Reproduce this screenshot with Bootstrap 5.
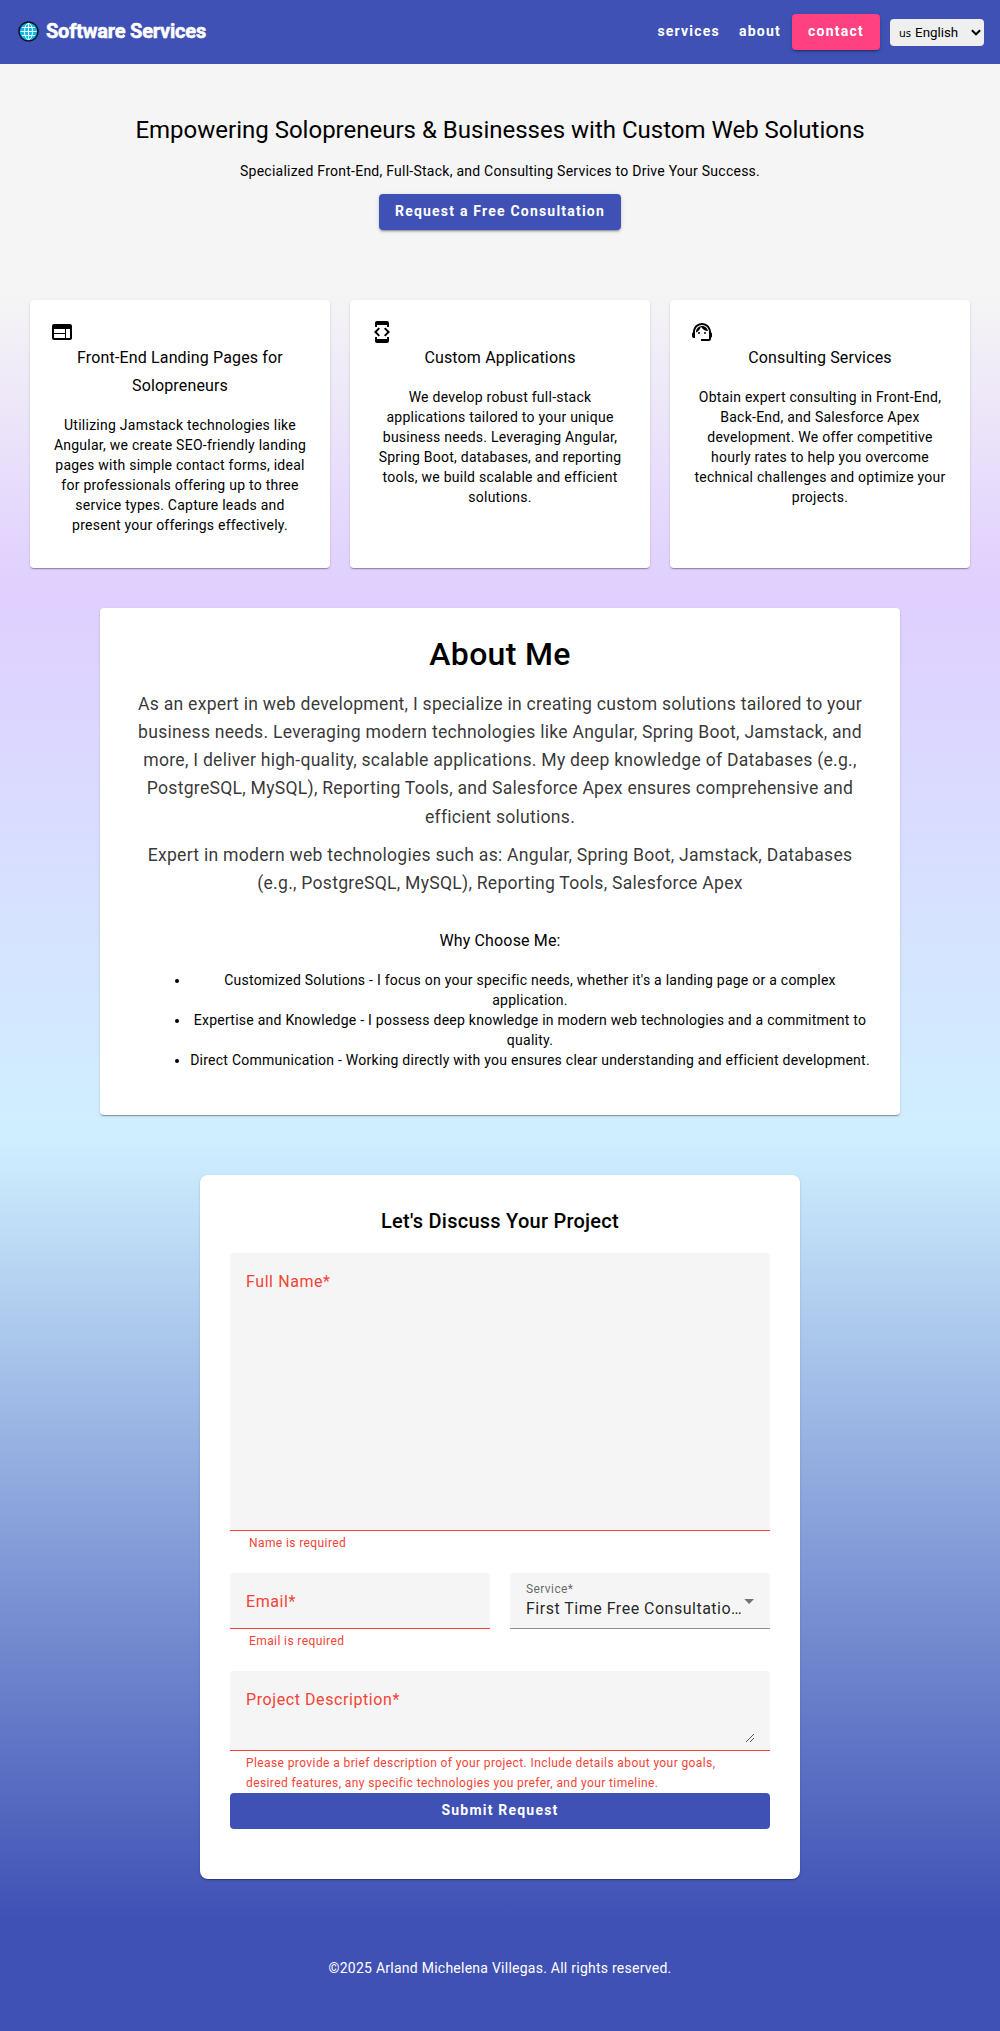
<!DOCTYPE html>
<html lang="en">
<head>
<meta charset="utf-8">
<meta name="viewport" content="width=device-width, initial-scale=1">
<title>Software Services</title>
<link href="https://cdn.jsdelivr.net/npm/bootstrap@5.3.0/dist/css/bootstrap.min.css" rel="stylesheet">
<style>
:root{--brand:#3f51b5;--pink:#ff4081;--err:#f44336}
body{font-family:Roboto,"Liberation Sans",sans-serif;font-size:14px;line-height:20px;letter-spacing:.25px;color:#000;min-height:2031px;
background:linear-gradient(180deg,#f5f5f5 0,#f5f5f5 290px,#e0cfff 590px,#cfefff 1140px,#3f51b5 1920px)}
.topbar{height:64px;background:var(--brand);padding:0 16px 2px 18px}
.brand{font-size:20px;line-height:24px;font-weight:700;color:#fff;letter-spacing:-.2px;gap:7px}
.brand span{-webkit-text-stroke:.5px #fff}
.act{height:36px;padding:0 16px 2px;border:0;border-radius:4px;font-size:14px;line-height:34px;font-weight:700;letter-spacing:1.25px;color:#fff;text-decoration:none;display:inline-block;text-align:center}
.act.flat{padding:0;letter-spacing:1.22px}
.topbar nav{padding-top:2px}
.raised{box-shadow:0 3px 1px -2px rgba(0,0,0,.2),0 2px 2px rgba(0,0,0,.14),0 1px 5px rgba(0,0,0,.12)}
.bg-brand{background:var(--brand);letter-spacing:1.21px}
.bg-pink{background:var(--pink)}
.lang{width:94px;height:27px;border:0;border-radius:4px;background:#efefef;color:#000;font-size:13.333px;line-height:25px;padding:0 3px 0 9px;letter-spacing:0;margin-left:10px;margin-top:1px}
.lang .cc{font-family:"Noto Sans",sans-serif;font-size:11px;margin-right:4px}
.hero{padding-top:50px;height:236px}
.hero h1{font-size:24px;line-height:32px;font-weight:400;letter-spacing:0;margin:0 0 15px}
.hero .tagline{margin-bottom:13px}
.sheet{border:0;border-radius:4px;background:#fff;color:#000;box-shadow:0 2px 1px -1px rgba(0,0,0,.2),0 1px 1px rgba(0,0,0,.14),0 1px 3px rgba(0,0,0,.12)}
.svc{width:300px;height:268px;padding:20px}
.svc svg{width:24px;height:24px;display:block}
.sub16{font-size:16px;line-height:28px;font-weight:400;letter-spacing:.15px;margin:0}
.svc .sub16{margin:0 0 15px}
.about{width:800px;height:507px;margin:40px auto 60px;padding:30px}
.about h2{font-size:32px;line-height:32px;font-weight:500;letter-spacing:.3px;margin:0 0 20px}
.about p{font-size:17.6px;line-height:28.16px;color:rgba(0,0,0,.8);letter-spacing:.25px;margin:0 0 10px}
.about .sub16{margin-top:30px}
.about ul{padding-left:60px;margin:15px 0 0}
.formcard{width:600px;height:704px;border-radius:8px;padding:30px}
.formcard h2{font-size:20px;line-height:32px;font-weight:500;letter-spacing:.25px;margin:0 0 16px}
.fld{background:#f5f5f5;border-radius:4px 4px 0 0;border-bottom:1px solid var(--err);color:var(--err);font-size:16px;line-height:24px;letter-spacing:.58px;padding:17px 16px 0}
.f-name{height:278px}
.f-mid{width:260px;height:56px}
.f-desc{height:80px;margin-top:20px}
.msg{color:var(--err);font-size:12px;line-height:20px;letter-spacing:.4px}
.msg.short{padding:2px 0 0 19px}
.f-svc{border-color:#8c8c8c;color:rgba(0,0,0,.87);padding-top:0;letter-spacing:.5px}
.f-svc small{display:block;font-size:12px;line-height:18px;letter-spacing:.4px;color:rgba(0,0,0,.6);margin-bottom:-1px}
.arrow{width:10px;height:5px;background:#737373;clip-path:polygon(0 0,100% 0,50% 100%);margin:2px 0 0 2px}
.foot{color:#fff;padding-top:79px}
</style>
</head>
<body>
<header class="topbar d-flex align-items-center justify-content-between">
  <div class="brand d-flex align-items-center">
    <svg width="21" height="21" viewBox="0 0 21 21"><circle cx="10.5" cy="10.5" r="9.5" fill="#03b9f2" stroke="#111" stroke-width="1.5"/><g fill="none" stroke="#fff" stroke-width="1"><ellipse cx="10.5" cy="10.5" rx="4" ry="8.1"/><path d="M10.500 2.500v16M2.500 10.500h16M4 6.500h13M4 14.500h13"/></g></svg>
    <span>Software Services</span>
  </div>
  <nav class="d-flex align-items-center">
    <a class="act flat me-3" href="#services">services</a>
    <a class="act flat" href="#about" style="margin:0 11px 0 3px">about</a>
    <a class="act bg-pink raised" href="#contact">contact</a>
    <button type="button" class="lang d-flex align-items-center justify-content-between"><span><span class="cc">us</span>English</span>
      <svg width="10" height="7" viewBox="0 0 10 7" fill="none" stroke="#000" stroke-width="2"><path d="M.9 1.200 5 5.300 9.100 1.200"/></svg></button>
  </nav>
</header>
<section class="hero text-center">
  <h1>Empowering Solopreneurs &amp; Businesses with Custom Web Solutions</h1>
  <div class="tagline">Specialized Front-End, Full-Stack, and Consulting Services to Drive Your Success.</div>
  <a class="act bg-brand raised" href="#contact">Request a Free Consultation</a>
</section>
<main>
  <section class="d-flex justify-content-center" id="services" style="gap:20px">
    <div class="sheet svc text-center">
      <svg viewBox="0 0 24 24"><path d="M20 4H4c-1.100 0-1.990.9-1.990 2L2 18c0 1.100.9 2 2 2h16c1.100 0 2-.9 2-2V6c0-1.100-.9-2-2-2zm-5 14H4v-4h11v4zm0-5H4V9h11v4zm5 5h-4V9h4v9z"/></svg>
      <h3 class="sub16">Front-End Landing Pages for Solopreneurs</h3>
      <div>Utilizing Jamstack technologies like Angular, we create SEO-friendly landing pages with simple contact forms, ideal for professionals offering up to three service types. Capture leads and present your offerings effectively.</div>
    </div>
    <div class="sheet svc text-center">
      <svg viewBox="0 0 24 24"><path d="M7 5h10v2h2V3c0-1.100-.9-1.990-2-1.990L7 1c-1.100 0-2 .9-2 2v4h2V5zm8.410 11.590L20 12l-4.590-4.590L14 8.830 17.170 12 14 15.170l1.410 1.420zM10 15.170L6.830 12 10 8.830 8.590 7.410 4 12l4.590 4.590L10 15.170zM17 19H7v-2H5v4c0 1.100.9 2 2 2h10c1.100 0 2-.9 2-2v-4h-2v2z"/></svg>
      <h3 class="sub16">Custom Applications</h3>
      <div>We develop robust full-stack applications tailored to your unique business needs. Leveraging Angular, Spring Boot, databases, and reporting tools, we build scalable and efficient solutions.</div>
    </div>
    <div class="sheet svc text-center">
      <svg viewBox="0 0 24 24"><path d="M21 12.220C21 6.730 16.740 3 12 3c-4.690 0-9 3.650-9 9.280-.6.340-1 .980-1 1.720v2c0 1.100.9 2 2 2h1v-6.100c0-3.870 3.130-7 7-7s7 3.130 7 7V19h-8v2h8c1.100 0 2-.9 2-2v-1.220c.590-.310 1-.920 1-1.640v-2.300c0-.700-.410-1.310-1-1.620z"/><circle cx="9" cy="13" r="1"/><circle cx="15" cy="13" r="1"/><path d="M18 11.030C17.520 8.180 15.040 6 12.050 6c-3.030 0-6.290 2.510-6.030 6.450 2.470-1.010 4.330-3.210 4.860-5.890 1.310 2.630 4 4.440 7.120 4.470z"/></svg>
      <h3 class="sub16">Consulting Services</h3>
      <div>Obtain expert consulting in Front-End, Back-End, and Salesforce Apex development. We offer competitive hourly rates to help you overcome technical challenges and optimize your projects.</div>
    </div>
  </section>
  <section class="sheet about text-center" id="about">
    <h2>About Me</h2>
    <p>As an expert in web development, I specialize in creating custom solutions tailored to your business needs. Leveraging modern technologies like Angular, Spring Boot, Jamstack, and more, I deliver high-quality, scalable applications. My deep knowledge of Databases (e.g., PostgreSQL, MySQL), Reporting Tools, and Salesforce Apex ensures comprehensive and efficient solutions.</p>
    <p>Expert in modern web technologies such as: Angular, Spring Boot, Jamstack, Databases (e.g., PostgreSQL, MySQL), Reporting Tools, Salesforce Apex</p>
    <h3 class="sub16">Why Choose Me:</h3>
    <ul>
      <li>Customized Solutions - I focus on your specific needs, whether it's a landing page or a complex application.</li>
      <li>Expertise and Knowledge - I possess deep knowledge in modern web technologies and a commitment to quality.</li>
      <li>Direct Communication - Working directly with you ensures clear understanding and efficient development.</li>
    </ul>
  </section>
  <section class="sheet formcard mx-auto" id="contact">
    <h2 class="text-center">Let's Discuss Your Project</h2>
    <div class="fld f-name">Full Name*</div>
    <div class="msg short">Name is required</div>
    <div class="d-flex justify-content-between" style="margin-top:20px">
      <div><div class="fld f-mid">Email*</div><div class="msg short">Email is required</div></div>
      <div class="fld f-mid f-svc d-flex align-items-center"><div class="text-nowrap"><small>Service*</small>First Time Free Consultatio…</div><span class="arrow"></span></div>
    </div>
    <div class="fld f-desc d-flex justify-content-between"><span>Project Description*</span>
      <svg class="align-self-end mb-2" width="8" height="8" viewBox="0 0 8 8" stroke="#555" stroke-width="1"><path d="M0 8 8 0M4 8 8 4"/></svg></div>
    <div class="msg px-3" style="padding-top:2px">Please provide a brief description of your project. Include details about your goals, desired features, any specific technologies you prefer, and your timeline.</div>
    <button class="act bg-brand w-100">Submit Request</button>
  </section>
</main>
<footer class="foot text-center">©2025 Arland Michelena Villegas. All rights reserved.</footer>
<script src="https://cdn.jsdelivr.net/npm/bootstrap@5.3.0/dist/js/bootstrap.bundle.min.js"></script>
</body>
</html>
